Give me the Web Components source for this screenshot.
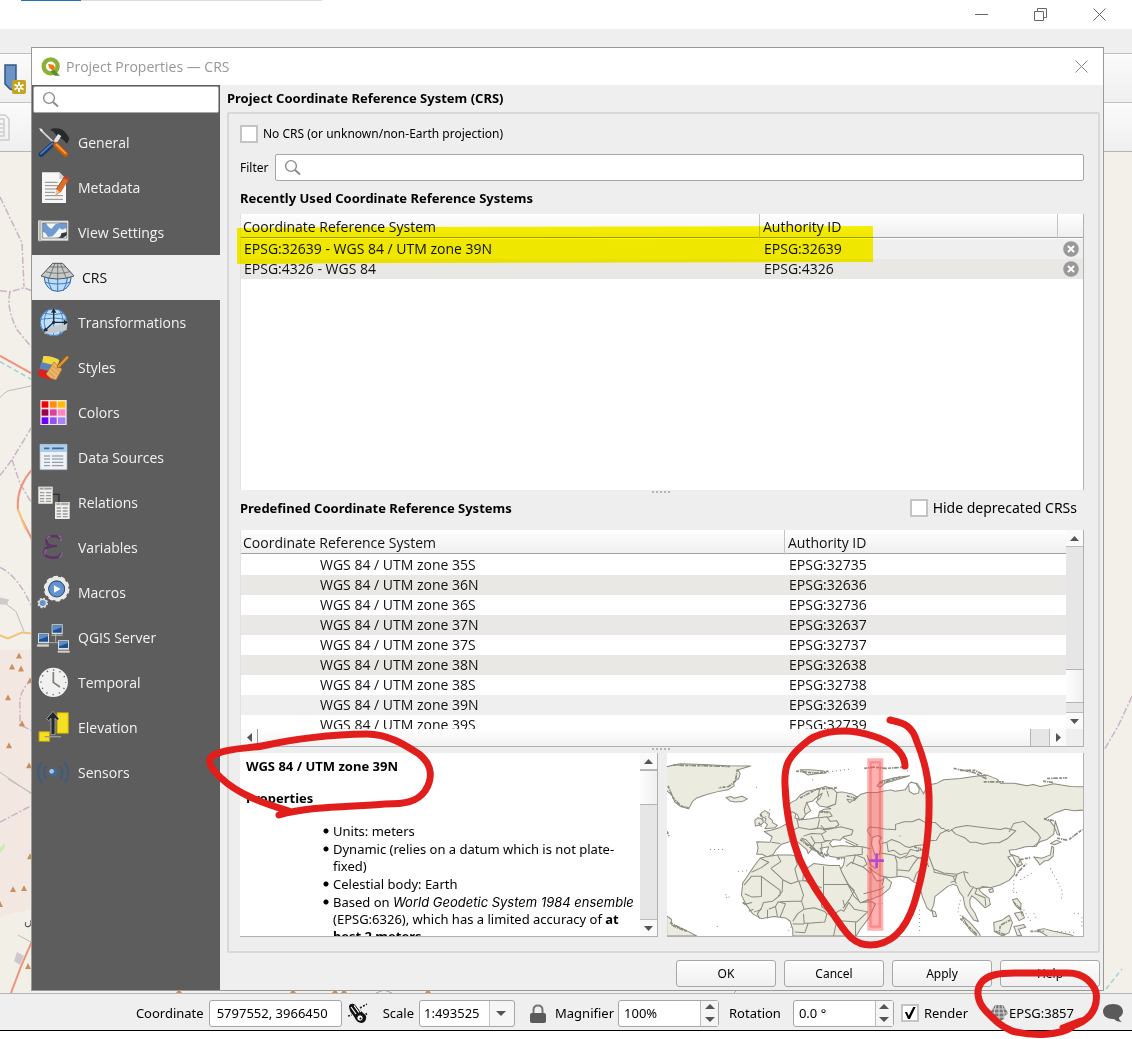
<!DOCTYPE html>
<html lang="en">
<head>
<meta charset="utf-8">
<title>Project Properties — CRS</title>
<style>
body {
  margin: 0;
  background: #fff;
  color: #111;
  font-family: 'Open Sans', 'Noto Sans', sans-serif;
  font-size: 14px;
  --small-font: 'Noto Sans', 'Open Sans', sans-serif;
  --line: #a6a6a6;
  --panel: #efefef;
}
</style>
</head>
<body>
<main-window></main-window>

<script>
// registers an element whose shadow root is cloned from the given markup
function define(name, html, setup) {
  const $template = document.createElement('template');
  $template.innerHTML = html;
  window.customElements.define(name, class extends HTMLElement {
    constructor() {
      super();
      this.attachShadow({mode: 'open'});
      this.shadowRoot.appendChild($template.content.cloneNode(true));
    }
    connectedCallback() {
      if (setup && !this.ready) {
        this.ready = true;
        setup(this, this.shadowRoot);
      }
    }
  });
}

/* ---------- small controls ---------- */

define('search-box', `
<style>
:host { display: block; height: 27px; }
label {
  display: flex;
  align-items: center;
  box-sizing: border-box;
  height: 100%;
  padding-left: 8px;
  gap: 6px;
  background: #fff;
  border: 1px solid var(--line);
  border-radius: 2px;
}
input { flex: 1; min-width: 0; border: 0; outline: 0; background: none; font: inherit; }
</style>
<label>
  <svg width="17" height="17" viewBox="0 0 17 17" fill="none" stroke="#8c8c8c"><circle cx="7" cy="7" r="5.4" stroke-width="1.4"/><path d="M11 11l5 4.5" stroke-width="2"/></svg>
  <input type="text">
</label>
`, (el, root) => {
  root.querySelector('input').setAttribute('aria-label', el.getAttribute('label'));
});

define('check-box', `
<style>
:host { display: block; }
label { display: flex; align-items: center; gap: 5px; height: 18px; white-space: nowrap; }
input {
  appearance: none;
  margin: 0;
  width: 18px;
  height: 18px;
  background: #fff;
  border: 2px solid #c4c4c4;
}
input:checked::before {
  content: '';
  display: block;
  width: 12px;
  height: 12px;
  margin: 1px;
  background: #000;
  clip-path: polygon(8% 42%, 26% 42%, 40% 72%, 78% 0, 98% 0, 50% 100%, 34% 100%);
}
</style>
<label><input type="checkbox"><span><slot></slot></span></label>
`, (el, root) => {
  root.querySelector('input').checked = el.hasAttribute('checked');
});

define('push-button', `
<style>
:host { display: block; width: 100px; }
button {
  width: 100%;
  height: 27px;
  padding: 0;
  border: 1px solid #a8a8a8;
  border-radius: 3px;
  background: linear-gradient(#fdfdfd, #f0f0f0);
  font: 12px/24px var(--small-font);
  color: #000;
}
</style>
<button type="button"><slot></slot></button>
`);

define('spin-field', `
<style>
:host { display: block; }
label { display: flex; align-items: center; gap: var(--label-gap, 4px); }
.field {
  display: flex;
  box-sizing: border-box;
  width: 101px;
  height: 27px;
  background: #fff;
  border: 1px solid var(--line);
  border-radius: 3px;
}
input { flex: 1; min-width: 0; border: 0; padding: 0 5px; background: none; font: inherit; color: #000; }
.arrows { display: flex; flex-direction: column; width: 17px; border-left: 1px solid #bbb; background: #f5f5f5; }
button { flex: 1; border: 0; padding: 0; background: none; }
svg { display: block; margin: 0 auto; fill: #555; }
</style>
<label><slot></slot>
  <span class="field">
    <input type="text">
    <span class="arrows">
      <button type="button" aria-label="Up"><svg width="10" height="5"><path d="M5 0l5 5H0z"/></svg></button>
      <button type="button" aria-label="Down"><svg width="10" height="5"><path d="M0 0h10L5 5z"/></svg></button>
    </span>
  </span>
</label>
`, (el, root) => {
  root.querySelector('input').value = el.getAttribute('value');
});

// scroll bar: before / thumb / after are flex weights of the track
define('scroll-bar', `
<style>
:host { display: flex; flex-direction: column; width: 17px; background: #e6e6e6; }
:host([horizontal]) { flex-direction: row; width: auto; height: 17px; }
button { flex: none; width: 17px; height: 17px; padding: 0; border: 0; background: #fafafa; border-bottom: 1px solid #bbb; }
button:last-child { border-bottom: 0; border-top: 1px solid #bbb; }
:host([horizontal]) button { border: 0; border-right: 1px solid #999; }
:host([horizontal]) button:last-child { border: 0; border-left: 1px solid #bbb; }
svg { display: block; margin: 0 auto; fill: #555; }
:host([horizontal]) svg { transform: rotate(-90deg); }
.thumb { background: linear-gradient(90deg, #fdfdfd, #f0f0f0); border: solid #b4b4b4; border-width: 1px 0; }
:host([horizontal]) .thumb { background: linear-gradient(#fff, #f1f1f1); border-width: 0 1px 0 0; }
</style>
<button type="button" aria-label="Back"><svg width="9" height="5"><path d="M4.500 0L9 5H0z"/></svg></button>
<div class="before"></div><div class="thumb"></div><div class="after"></div>
<button type="button" aria-label="Forward"><svg width="9" height="5"><path d="M0 0h9L4.500 5z"/></svg></button>
`, (el, root) => {
  for (const part of ['before', 'thumb', 'after']) {
    root.querySelector('.' + part).style.flex = (el.getAttribute(part) || 0) + ' 0 0';
  }
});

define('splitter-grip', `
<style>
:host { display: flex; justify-content: center; height: 6px; }
i { width: 20px; height: 2px; margin-top: 1px; background: repeating-linear-gradient(90deg, #b5b5b5 0 2px, transparent 2px 4px); }
</style>
<i></i>
`);

/* ---------- side navigation ---------- */

const ICONS = {
  General: `<path d="M121 389l44 42" stroke="#d5d8d8" stroke-width="5"/><path d="M117 384l9 3 4 8-8-3z" fill="#eee"/>
    <path d="M182 404l-24 30" stroke="#d8dbe0" stroke-width="9"/><path d="M158 432l-35 32" stroke="#1d3c6b" stroke-width="15" stroke-linecap="round"/><path d="M157 430l-34 31" stroke="#4b7fc0" stroke-width="5" stroke-linecap="round"/>
    <path d="M167 434l30 29" stroke="#ce5c00" stroke-width="15" stroke-linecap="round"/><path d="M169 433l28 27" stroke="#fba04a" stroke-width="5" stroke-linecap="round"/>
    <path d="M150 389q14-7 32-2 12 4 24 24l2 6-7 14-14-14-16-5q-4-16-21-23z" fill="#262a2b"/><path d="M174 402l10 6-12 18-9-7z" fill="#e6e6e6"/>`,
  Metadata: `<path d="M126 517h52l20 20v72h-72z" fill="#f7f7f5"/><path d="M178 517v20h20z" fill="#cfcfcc"/><path d="M135 547h38M135 557h40M135 567h36M135 577h30M135 587h54M135 598h54" stroke="#8b8b88" stroke-width="3"/>
    <path d="M194 530l14 6-25 40-16 10 3-21z" fill="#d9702e"/><path d="M194 530l-24 36" stroke="#a84a14" stroke-width="3"/><path d="M193 527l16 7-4 8-15-8z" fill="#c44127"/><path d="M170 568l9 8-13 9z" fill="#e8caa0"/>`,
  'View Settings': `<path d="M114 662h91v60h-91z" fill="#e4e4e2"/><path d="M116 660h8v64h-8z" fill="#b9b9b5"/><path d="M128 669h72v45h-72z" fill="#f4f6fa"/><path d="M128 669h10l6 10 10 8 12-14 14-4h20v14l-12 6-10-4-8 10-12 14-14 2-8-12-8-4z" fill="#6f9bd1"/><path d="M170 714q14-2 14-14l17-4v9l-12 9z" fill="#333a3d"/><path d="M128 669h72v45h-72z" fill="none" stroke="#67696b" stroke-width="2"/>`,
  CRS: `<circle cx="173" cy="84" r="40" fill="#b9dcfa" stroke="#33649c" stroke-width="3"/><path d="M136 97q37 10 74 0M173 44v81M153 46q-20 36 4 77M193 46q20 36-4 77" fill="none" stroke="#4278b8" stroke-width="3"/>
    <path d="M158 40h30l34 38q-49 18-99 0z" fill="#c5c8c8" stroke="#555" stroke-width="3"/><path d="M173 40v48M165 40l-18 45M181 40l18 45M148 51h50M136 65q37 10 74 0" fill="none" stroke="#555" stroke-width="2"/>`,
  Transformations: `<circle cx="161" cy="217" r="41" fill="#bfe0fb"/><circle cx="161" cy="217" r="40" fill="none" stroke="#3f77bb" stroke-width="3"/><path d="M121 208q40-8 80 0M126 238q35 8 70 0M161 177v80M143 180q-22 37 2 75M179 180q22 37-2 75M132 190q29 8 58 0" fill="none" stroke="#4a85c9" stroke-width="3"/>
    <path d="M150 232l52-12-2 20-34 8-34 4z" fill="#c4c9cc"/><path d="M161 217v-34M161 217h34M161 217l-24 22" stroke="#23292c" stroke-width="4"/><path d="M153 188l8-14 8 14zM192 209l12 8-12 8zM131 245l4-13 9 10z" fill="#23292c"/><circle cx="161" cy="217" r="5" fill="#23292c"/>`,
  Styles: `<path d="M130 318q24-2 48 12l-6 20-46-12z" fill="#f2d944"/><path d="M124 336l46 12-8 18-44-8z" fill="#5b84b8"/><path d="M116 356l46 10-4 22q-30 0-44-14z" fill="#d8231f"/><path d="M162 336l24 22-18 32q-18-2-30-18z" fill="#ecb368" stroke="#a86a1c" stroke-width="2"/><path d="M146 366l18 16M152 356l20 18M158 348l20 16" stroke="#c48736" stroke-width="2"/><path d="M176 349l26-27" stroke="#8d5a12" stroke-width="11" stroke-linecap="round"/><path d="M176 349l26-27" stroke="#e09632" stroke-width="7" stroke-linecap="round"/>`,
  Colors: `<path d="M121 450h79v75h-79z" fill="#efe4ee"/><path d="M125 454h20v19h-20z" fill="#f40000"/><path d="M150 454h20v19h-20z" fill="#ff9000"/><path d="M174 454h22v19h-22z" fill="#fcc000"/><path d="M125 478h20v19h-20z" fill="#9c0046"/><path d="M150 478h20v19h-20z" fill="#e0409c"/><path d="M174 478h22v19h-22z" fill="#ff86b8"/><path d="M125 502h20v20h-20z" fill="#6a00f8"/><path d="M150 502h20v20h-20z" fill="#9450f8"/><path d="M174 502h22v20h-22z" fill="#a684f4"/>`,
  'Data Sources': `<path d="M120 583h81v76h-81z" fill="#f0f1f2"/><path d="M121 584h79v22h-79z" fill="#a9cdec"/><path d="M120 583h81v76h-81z" fill="none" stroke="#9db8d2" stroke-width="2"/><path d="M132 595h16M156 595h35" stroke="#456a94" stroke-width="5"/><path d="M132 618h18M132 627h18M132 637h18M132 647h18M156 618h34M156 627h34M156 637h34M156 647h34" stroke="#7b8ca4" stroke-width="3"/>`,
  Relations: `<path d="M158 733h19v24" fill="none" stroke="#2c3135" stroke-width="4"/><path d="M115 710h43v51h-43zM165 756h44v51h-44z" fill="#efefec"/><path d="M115 710h43v10h-43zM165 756h44v10h-44z" fill="#d3d3cf"/><path d="M120 716h10M134 716h20M120 728h13M120 737h13M120 746h13M120 754h13M138 728h15M138 737h15M138 746h15M138 754h15M170 762h10M184 762h20M170 774h13M170 783h13M170 792h13M170 800h13M188 774h15M188 783h15M188 792h15M188 800h15" stroke="#9c9c98" stroke-width="4"/>`,
  Variables: `<path d="M183 58q-6-10-24-10-20 0-20 14 0 15 20 16h12M159 79q-26 0-26 18 0 16 26 16 20 0 27-13" fill="none" stroke="#5c3566" stroke-width="8"/><path d="M176 47q8 4 8 16M141 58q2-8 10-10M136 104q-4-10 4-16M178 112q8-4 9-14" fill="none" stroke="#8d6795" stroke-width="4"/>`,
  Macros: `<circle cx="170" cy="206" r="30" fill="none" stroke="#eceae6" stroke-width="11" /><circle cx="170" cy="206" r="35" fill="none" stroke="#eceae6" stroke-width="7" stroke-dasharray="14 8"/><circle cx="170" cy="207" r="24" fill="#6293cf" stroke="#2d4f7c" stroke-width="3"/><path d="M162 196l20 11-20 11z" fill="#fff"/><circle cx="128" cy="249" r="11" fill="#6293cf" stroke="#e4e4e0" stroke-width="4"/><circle cx="128" cy="249" r="14" fill="none" stroke="#e4e4e0" stroke-width="4" stroke-dasharray="6 5"/>`,
  'QGIS Server': `<path d="M167 342v24M132 368h50" fill="none" stroke="#a8aaa8" stroke-width="3"/><path d="M155 313h33v30h-33zM114 340h33v30h-33zM174 361h33v28h-33z" fill="#dcdcd8"/><path d="M158 316h27v22h-27zM117 343h27v22h-27zM177 364h27v20h-27z" fill="#1f4f91"/><path d="M158 316h27v6l-27 10zM117 343h27v6l-27 10zM177 364h27v5l-27 10z" fill="#5f8cc4"/><path d="M154 346h34M112 374h34v5h-34zM174 393h34v4h-34z" fill="#d5d5d1" stroke="#d5d5d1" stroke-width="2"/>`,
  Temporal: `<circle cx="160" cy="487" r="44" fill="#f1f2f0"/><circle cx="160" cy="487" r="37" fill="none" stroke="#41668f" stroke-width="4" stroke-dasharray="4 15.370" stroke-dashoffset="2"/><path d="M160 456v31l20 14" fill="none" stroke="#7e7e7c" stroke-width="5"/>`,
  Elevation: `<path d="M171 578h34v62h-34z" fill="#f7e020" stroke="#b79c0c" stroke-width="3"/><path d="M117 635h32v29h-32z" fill="#f7e020" stroke="#b79c0c" stroke-width="3"/><path d="M134 650h49" stroke="#9a9a94" stroke-width="4"/><path d="M159 574l18 22-5 6-7-7v49h-12v-49l-7 7-6-6z" fill="#22282a" stroke="#c9cbc9" stroke-width="2"/>`,
  Sensors: `<circle cx="159" cy="757" r="12" fill="#3c699f"/><circle cx="155" cy="754" r="7" fill="#a8c4e4"/><path d="M139 739q-14 18 0 38M125 727q-22 30 0 62M180 739q14 18 0 38M194 727q22 30 0 62" fill="none" stroke="#3c5b80" stroke-width="6"/>`
};
// top of each icon's cell on the icon sheet
const ICON_TOP = {
  General: 378, Metadata: 513, 'View Settings': 648, CRS: 33, Transformations: 168, Styles: 303, Colors: 438,
  'Data Sources': 573, Relations: 708, Variables: 33, Macros: 168, 'QGIS Server': 303, Temporal: 438, Elevation: 573, Sensors: 708
};

define('nav-item', `
<style>
:host { display: block; }
button {
  display: flex;
  align-items: center;
  gap: 9px;
  width: 100%;
  height: 45px;
  padding: 0 5px;
  border: 0;
  background: none;
  color: #f2f2f2;
  font: inherit;
  text-align: left;
}
:host([selected]) button { background: var(--panel); color: #111; }
svg { flex: none; overflow: visible; }
</style>
<button type="button"><svg width="32" height="33" fill="none"></svg><slot></slot></button>
`, (el, root) => {
  const name = el.textContent;
  const svg = root.querySelector('svg');
  // the selected entry has a larger icon
  const width = el.hasAttribute('selected') ? 36 : 32;
  svg.setAttribute('width', width);
  svg.setAttribute('viewBox', `111 ${ICON_TOP[name]} ${width * 3} 99`);
  svg.innerHTML = ICONS[name];
});

define('side-nav', `
<style>
:host { display: flex; flex-direction: column; width: 188px; background: #5d5d5d; }
search-box { margin: 1px 1px 7px; }
nav { display: flex; flex-direction: column; }
</style>
<search-box label="Search options"></search-box>
<nav></nav>
`, (el, root) => {
  const nav = root.querySelector('nav');
  Object.keys(ICONS).forEach(name => {
    const item = document.createElement('nav-item');
    item.textContent = name;
    if (name === el.getAttribute('current')) item.setAttribute('selected', '');
    nav.appendChild(item);
  });
});

/* ---------- CRS tables ---------- */

const tableStyle = `
:host { display: flex; min-height: 0; box-sizing: border-box; background: #fff; border-right: 1px solid #b0b0b0; border-left: 1px solid #e2e2e2; overflow: hidden; }
table { width: 100%; table-layout: fixed; border-collapse: separate; border-spacing: 0; }
th {
  box-sizing: border-box;
  height: 25px;
  padding: 2px 2px 0;
  text-align: left;
  font-weight: normal;
  line-height: 22px;
  background: linear-gradient(#fff, #eee);
  border-bottom: 1px solid #fff;
  border-right: 1px solid #c4c4c4;
  box-shadow: inset 0 -1px #a0a0a0;
}
th + th { padding-left: 3px; }
th:last-child { border-right: 0; }
td { height: 20px; padding: 0 3px; line-height: 20px; white-space: nowrap; }
td + td { padding: 0 4px; }
tr.alt td { background: #e9e8e4; }
tr.current td { background: #efefef; }
`;

define('recent-crs-table', `
<style>${tableStyle}
div { width: 100%; }
button { display: block; margin: 0 auto; padding: 0; border: 0; background: none; }
svg { display: block; }
</style>
<div>
<table>
  <colgroup><col><col style="width:298px"><col style="width:25px"></colgroup>
  <thead><tr><th>Coordinate Reference System</th><th>Authority ID</th><th></th></tr></thead>
  <tbody></tbody>
</table>
</div>
`, (el, root) => {
  const rows = [['EPSG:32639 - WGS 84 / UTM zone 39N', 'EPSG:32639', 'current'], ['EPSG:4326 - WGS 84', 'EPSG:4326', 'alt']];
  root.querySelector('tbody').innerHTML = rows.map(([name, id, cls]) => `
    <tr class="${cls}"><td>${name}</td><td>${id}</td><td><button type="button" aria-label="Remove"><svg width="16" height="16"><circle cx="8" cy="8" r="7.800" fill="#999"/><path d="M5 5l6 6M11 5l-6 6" stroke="#fff" stroke-width="2"/></svg></button></td></tr>`).join('');
});

define('predefined-crs-table', `
<style>${tableStyle}
:host { flex-direction: column; border-bottom: 1px solid #b0b0b0; }
.top { display: flex; height: 199px; }
.rows { flex: 1; overflow: hidden; }
td:first-child { padding-left: 79px; }
.bottom { display: flex; background: var(--panel); }
.bottom scroll-bar { flex: 1; }
.bottom span { width: 17px; }
</style>
<div class="top">
  <div class="rows">
    <table>
      <colgroup><col><col style="width:281px"></colgroup>
      <thead><tr><th>Coordinate Reference System</th><th>Authority ID</th></tr></thead>
      <tbody></tbody>
    </table>
  </div>
  <scroll-bar before="124" thumb="33" after="9"></scroll-bar>
</div>
<div class="bottom"><scroll-bar horizontal thumb="773" after="18"></scroll-bar><span></span></div>
`, (el, root) => {
  const zones = ['35S', '36N', '36S', '37N', '37S', '38N', '38S', '39N', '39S'];
  root.querySelector('tbody').innerHTML = zones.map((zone, i) => {
    const code = (zone.endsWith('N') ? 'EPSG:326' : 'EPSG:327') + zone.slice(0, 2);
    const cls = zone === '39N' ? 'current' : i % 2 ? 'alt' : '';
    return `<tr class="${cls}"><td>WGS 84 / UTM zone ${zone}</td><td>${code}</td></tr>`;
  }).join('');
});

/* ---------- details and extent ---------- */

define('crs-details', `
<style>
:host { display: flex; box-sizing: border-box; background: #fff; border: 1px solid #b0b0b0; border-width: 0 1px 1px 0; overflow: hidden; font: 13px/17px var(--small-font); color: #000; }
.text { flex: 1; padding: 5px 5px 0 6px; overflow: hidden; }
h3 { margin: 0 0 15px; font-size: 13px; line-height: 17px; }
h3:nth-of-type(2) { margin-bottom: 16px; }
ul { margin: 0; padding: 0 0 0 77px; list-style: none; }
li { margin-bottom: 1px; padding-left: 10px; background: radial-gradient(circle at 3px 8px, #000 2px, transparent 3px); }
i { font-family: 'Inter', sans-serif; }
</style>
<div class="text">
  <h3>WGS 84 / UTM zone 39N</h3>
  <h3>Properties</h3>
  <ul>
    <li>Units: meters</li>
    <li>Dynamic (relies on a datum which is not plate-fixed)</li>
    <li>Celestial body: Earth</li>
    <li>Based on <i>World Geodetic System 1984 ensemble</i> (EPSG:6326), which has a limited accuracy of <b>at best 2 meters</b>.</li>
  </ul>
</div>
<scroll-bar thumb="33" after="116"></scroll-bar>
`);

define('extent-map', `
<style>
:host { display: block; box-sizing: border-box; background: #fff; border: 1px solid #b0b0b0; border-width: 0 1px 1px 0; overflow: hidden; }
svg { display: block; width: 100%; height: 100%; }
.land { fill: #ecebe0; stroke: #8b8a7e; stroke-width: 3; stroke-linejoin: round; }
.border { fill: none; stroke: #8b8a7e; stroke-width: 3; stroke-linejoin: round; }
.sea { fill: #fff; stroke: #8b8a7e; stroke-width: 3; }
.coast { fill: none; stroke: #8b8a7e; stroke-width: 5; stroke-dasharray: 9 3 4 2 14 4; }
.dots { fill: none; stroke: #8b8a7e; stroke-width: 3; stroke-dasharray: 3 9; }
</style>
<svg viewBox="21 42 1248 546" preserveAspectRatio="none" role="img" aria-label="Extent of the selected CRS">
  <g class="land">
    <path d="M15 84L60 74 130 76 200 80 272 81 234 92 240 104 236 118 220 128 222 140 204 152 170 158 140 166 110 176 98 186 86 208 62 202 44 188 36 168 15 150z"/>
    <path d="M198 175l16-3 8 5 24-6 16 8-16 8-22 1-14-3z"/>
    <path d="M302 222l12-8 14 8-2 12 10 8 2 8 14 8-8 7-30 3 8-12-8-8 4-10-12-6zM284 243l10-8 12 4 4 10-8 8-16 3z"/>
    <path d="M290 307L330 308 336 292 318 280 312 276 335 272 360 264 385 250 392 236 390 222 400 214 408 222 404 236 425 241 452 238 474 234 478 218 490 210 512 208 500 204 526 194 528 160 545 158 575 164 592 174 582 184 560 180 568 190 584 180 600 166 620 160 650 160 690 152 705 156 735 152 745 136 770 132 782 150 790 164 796 150 800 138 830 132 850 122 900 118 940 112 980 108 1010 120 1020 132 1060 132 1100 140 1118 136 1140 142 1180 134 1230 142 1275 143 1275 212 1240 214 1215 210 1185 220 1152 240 1170 246 1182 262 1180 284 1160 300 1140 306 1120 320 1095 322 1066 330 1046 332 1050 344 1062 348 1074 352 1086 374 1072 382 1064 366 1056 348 1042 352 1052 366 1066 384 1062 404 1046 422 1018 436 990 444 966 440 956 450 968 462 986 476 990 494 974 504 962 492 948 478 934 468 928 482 930 500 944 520 954 545 940 540 922 514 914 500 908 470 898 458 890 438 878 434 862 440 840 458 824 470 820 496 812 514 800 504 786 470 776 434 762 428 744 414 720 410 690 414 660 408 640 396 628 384 640 410 650 424 668 420 672 410 694 428 688 446 664 466 630 480 600 490 584 460 562 430 540 390 550 376 554 352 530 354 508 350 500 338 506 322 480 326 486 340 492 354 478 346 466 330 450 314 436 300 424 296 440 312 462 326 454 330 444 342 440 330 416 310 400 300 384 308 364 314 348 330 340 344 322 352 306 344 290 344 294 326z"/>
    <path d="M386 217L384 202 392 190 408 182 420 168 440 156 470 150 496 142 520 150 530 160 526 194 500 204 478 200 468 188 480 176 486 162 470 174 456 186 440 190 446 204 452 214 436 226 428 240 418 242 412 226 398 218z"/>
    <path d="M300 356l14-4 38-6 38 0 14 2 6 20 24 10 10 6 16-12 48 6 30 0 6 18 20 40 18 34 18 18 36-2 10 6-20 42-26 34-12 20h-190l0-20-8-24-14-10-34-4-38 6-26-14-20-28-14-28 4-36 20-30 18-26z"/>
    <path d="M20 528l14 10 2 18 20 6 24 10 30 16H20zM815 512l10 4 4 14-10 0z"/>
    <path d="M905 528l24 20 26 30 6 12h-10l-24-22zM1000 548l26-8 20-14 10 22-10 30-20 10-24-14zM1060 560l30-6 6 8-22 6 10 20-14-2-6-18zM1130 570l20-4 30 8 50 10 20 10h-80z"/>
    <path d="M1056 480l14-4 12 16-2 18-14-12zM1062 520l24-4 6 18-16 8zM1120 352l24 4 26-10 4-26 6 4-2 26-14 12-12 2-14 12-6-10zM1170 312l18-10 14 6-20 8zM1184 244l8 24 6 20-8-4-8-20zM985 450l12-4 2 10-10 2z"/>
    <path d="M650 140l12-14 40-10 46-6-34 10-40 12-14 12zM420 92l30 0 40 4 8 6-30 2-24 4z"/>
  </g>
  <g class="sea">
    <path d="M508 312l10-12 22 2 8-8 14 8 30 14-10 6-40-4-26 4z"/>
    <path d="M636 294l18-6 10 6-8 12 6 16-4 22-14 2-6-18-4-14z"/>
    <path d="M745 135l8-6 14 4 10 16-2 12-14 4-14-8z"/>
  </g>
  <path class="border" d="M334 308l26 4M388 250l4 16-4 14 6 16M410 240l6 24 34 6 22-4 6-26M416 264l-22 10M430 290l24-8 30 2 14-8-16-10-30 4M484 284l8 18 20 2M440 188l-8 24 4 14M478 152l-6 30M500 154l6 18M474 236l26-4 10 14 20-2 6 12-12 8-32 4-10-10M478 216l30 2 8 12-14 4M482 268l20 2 40-8 36 10-4 14-26 6M452 290l12 20 20 0 18-6M464 310l-8 14M484 312l2 20M556 306l30 14 20 2 24 6M606 322l0 22-50 6M620 275l8-12 26 2 20 4 32 2 0-16 26-8 24 0 20-8 18 10 30 0 20 18 8 0M622 275l10 16M664 312l16-4 14-8 22 8 18 12 14 4 20-6 22-2 16-12 22-2 12-20 26-12M680 310l4 26 16-4 20 14 20-6M740 346l10-16 20 4 22-6 10 22-28 6-16-8-16 4-8 4M660 340l24 4 20 4 6 20 0 44M706 350l14 6 20-8M710 390l36 4 14-22 14-18 20 6 12 22M760 424l8-22 18-20 18-10M806 350l14 38 30 12 40 4 20-8 14 4M820 388l2 10 56 12 10-2M890 404l-6 20-14 4M878 410l10 22M910 398l6 22 14 20 18 6 34-4M940 440l-10 16-8 14M950 446l-6 16 30 12 2 24M852 270l14 6 20-12 34-6 46 6 54 6 16-4 30 8-26 24-24 12-24 0-24 4-22-6-18 0-16-14-26-10-14-14M1046 278l14-26 30-6 26 22 16 14 8 12-12 26-14 2M556 350l30-4 26 10 8 18-12 8-36-14-14 12M586 346l-10 28M608 382l22 18M620 346l10 28 16 14M610 462l32-8 20-6 10-8M600 490l26-12M672 414l-6 22"/>
  <path class="border" d="M300 356l26 12-22 16-30 14M352 346l10 20-30 20M332 386l36 34 24 12 24-8M404 348l8 26-8 14 10 36 40-2M490 380v54h72M490 434v30l-6 8v28l18 14M432 378l-4 44 56 22M304 410l0 60-28 2-22-10M304 410l56 42 0 14-22 18-28 4-8 22-20 6M304 410l-30 0-22 26M368 420l-2 36-12 14M360 486l40-2 24 0 6-18-14-42M424 484l8 24-20 14-14 22M322 510v26M326 508l20-8 6 30M346 500l8-14 22 6-16 40M302 506l-10 16 6 14M276 488l-24 6M280 508l-14 6M432 508l30-4 30 10 8 8 24-2 18-10 10 4M500 522l-6 24-50 4-12 0-2-28M444 550l-10 28-30-2M530 542l-10 46M524 520l6 22 30 2 30 2 32-30-40-8-16-20-16 28M586 546v42M400 552h32M548 480l6 22M562 434l20 18-14 26-20 28"/>
  <path class="coast" d="M40 78l170 4M232 90l-6 36-20 16-30 4M24 140l14 34 24 26 24 6M420 176l50-26 60-4M408 96l60 6 36-6M612 88l30-4 34 4 58-4M660 132l60-18M880 88l60 12 40 20M900 94l44 0 36 18M970 128l60 0M1160 118l60-2M1148 126l30 4M300 224l8 18M296 250l8 12M420 300l38 30 26 10 20 8M456 326l30 22M530 358l20-2M1150 238l30 6M1066 410l10-16 22-22M1070 380l10-20 30-6M1060 488l20 18 6 22M1050 540l-30 16-4 24M1190 296l30 6M1226 300l40-30M1110 574l40 0M900 536l50 48M1004 574l30 10M30 548l50 26M248 488l14 10M40 558l40 16M21 276l6 14M494 346l10 4M762 322l20 6M768 334l24-4M480 218l24 2M430 238l-20 4M560 170l28 8"/>
  <path class="dots" d="M150 330h40M234 396l36-4M196 464l14 10M198 474l10-6M480 102l90-12M288 144h8M330 210l-20 34M778 510v70M900 480l-8 34 16 26M1170 386l16 30 20 40-4 28M1060 420v40M1056 452l20 10M1090 510l20 34M1080 420l36-20M1240 520l20 2M1120 520l10 20M400 550l-20 30M640 492h30M1190 574l60 4M170 560h4M1264 532v30M456 122h4M718 290h4M740 96l10 0"/>
  <path d="M645 82v466" stroke="#ff5050" stroke-opacity="0.450" stroke-width="48" stroke-linecap="square"/>
  <path d="M631 70h28v490h-28z" fill="none" stroke="#ee4444" stroke-opacity="0.350" stroke-width="7"/>
  <path d="M649 341v44M627 363h44" stroke="#b44ad2" stroke-width="8"/>
</svg>
`);

/* ---------- dialog ---------- */

define('properties-dialog', `
<style>
:host { display: flex; flex-direction: column; box-sizing: border-box; background: var(--panel); border: 1px solid #999; }
header { display: flex; align-items: center; gap: 5px; height: 37px; padding: 0 15px 0 9px; background: #fff; color: #979797; font-size: 14px; }
header h1 { flex: 1; margin: 0; font-size: 14px; font-weight: normal; }
header button { padding: 0; border: 0; background: none; }
header svg { display: block; }
.body { display: flex; flex: 1; min-height: 0; }
.page { display: flex; flex: 1; flex-direction: column; min-width: 0; padding: 0 3px 3px 7px; }
h2 { margin: 0; font: bold 13px/28px var(--small-font); color: #000; }
.page > h2 { line-height: 27px; }
.group {
  display: flex;
  flex: 1;
  flex-direction: column;
  min-height: 0;
  padding: 11px 14px 14px 11px;
  border: 2px solid #d8d8d8;
  border-radius: 2px;
  background: #eee;
}
.small { font: 12px/18px var(--small-font); color: #000; }
.filter { display: flex; align-items: center; gap: 7px; margin: 11px 0 3px; }
.filter search-box { flex: 1; }
recent-crs-table { flex: 1; margin-top: 2px; }
.predefined { display: flex; justify-content: space-between; align-items: center; height: 24px; padding: 0 7px 10px 0; }
.predefined check-box { font: 14px/18px var(--small-font); color: #000; }
predefined-crs-table { height: 217px; }
.bottom { display: flex; gap: 9px; height: 184px; }
.bottom > * { flex: 1; }
footer { display: flex; justify-content: flex-end; gap: 8px; padding-top: 7px; }
</style>
<header>
  <svg width="20" height="19" viewBox="123 169 60 57" fill="none"><circle cx="152" cy="197" r="21" stroke="#8cb135" stroke-width="13"/><path d="M160 205l20 20h-16l-12-12z" fill="#58902c"/><path d="M144 190l16 2 6 10-8 8-10-8z" fill="#ee7913"/></svg>
  <h1>Project Properties — CRS</h1>
  <button type="button" aria-label="Close"><svg width="13" height="13" stroke="#888"><path d="M0.500 0.500l12 12M12.500 0.500l-12 12"/></svg></button>
</header>
<div class="body">
  <side-nav current="CRS"></side-nav>
  <div class="page">
    <h2>Project Coordinate Reference System (CRS)</h2>
    <div class="group">
      <check-box class="small">No CRS (or unknown/non-Earth projection)</check-box>
      <div class="filter small"><span>Filter</span><search-box label="Filter"></search-box></div>
      <h2>Recently Used Coordinate Reference Systems</h2>
      <recent-crs-table></recent-crs-table>
      <splitter-grip></splitter-grip>
      <div class="predefined"><h2>Predefined Coordinate Reference Systems</h2><check-box>Hide deprecated CRSs</check-box></div>
      <predefined-crs-table></predefined-crs-table>
      <splitter-grip></splitter-grip>
      <div class="bottom"><crs-details></crs-details><extent-map></extent-map></div>
    </div>
    <footer>
      <push-button>OK</push-button>
      <push-button>Cancel</push-button>
      <push-button>Apply</push-button>
      <push-button>Help</push-button>
    </footer>
  </div>
</div>
`);

/* ---------- main window ---------- */

define('map-canvas', `
<style>
:host { display: block; background: #f3efe9; overflow: hidden; }
svg { display: block; width: 100%; height: 100%; }
text { font: 12px 'DejaVu Sans', sans-serif; }
</style>
<svg viewBox="0 152 1132 842" preserveAspectRatio="none" fill="none" aria-hidden="true">
  <path d="M0 650h32v260l-32 10z" fill="#f3e8e1"/>
  <path d="M0 920q20-14 31 0v73H0z" fill="#f2f0e6"/>
  <g stroke="#c9b4c9" stroke-width="1.500" stroke-dasharray="7 2 2 2">
    <path d="M0 197l22 46 2 44M0 291l10 1 14-4 8 3M10 292q-4 16 7 38l15 18M32 427l-20 33-12 16M12 460l8 24 12 20M0 568q18 8 32 40M32 680q-14 12-12 28l0 18 12 5M0 823l32-17M1132 697l-14 30-14 24"/>
  </g>
  <path d="M0 398q6-8 14-8l18-4M0 600l16 12 8 20M0 773l32 22M8 780l24 14M18 936l13 7" stroke="#bbb"/>
  <path d="M0 356l32 18M32 470q-16 18-14 40M32 942q-12 26-21 52M22 520l10 20" stroke="#f0937c" stroke-width="2"/>
  <path d="M18 510l8 20M0 636l8 3 14-6 10 1" stroke="#f5c07a" stroke-width="2"/>
  <path d="M0 362l32 18M1106 990l16-20" stroke="#9fd0d8" stroke-width="1.500" stroke-dasharray="5 3"/>
  <path d="M0 598l9 2-2 5H0z" fill="#ccc"/><path d="M0 848l5-4v4l-5 6z" fill="#cdebb0"/><path d="M17 953l7 4-4 9-6-4z" fill="#ccc8cc"/>
  <path d="M16 659l3-6 3 6zM9 670l3-6 3 6zM18 672l3-6 3 6zM27 684l3-6 3 6zM5 701l3-6 3 6zM19 727l3-6 3 6zM6 749l3-6 3 6zM26 769l3-6 3 6zM27 860l3-6 3 6zM10 893l3-6 3 6zM21 892l3-6 3 6zM-3 908l3-6 3 6zM25 970l3-6 3 6zM176 994l3-4 3 4zM290 994l3-4 3 4zM332 994l3-4 3 4zM341 994l3-4 3 4zM425 994l3-4 3 4z" fill="#c9905a"/>
  <path d="M376 994l8-3 8 3M734 994l3-3" stroke="#b9a0b0"/>
  <text x="24" y="925" fill="#555">س</text>
</svg>
`);

define('status-bar', `
<style>
:host {
  display: flex;
  align-items: center;
  justify-content: flex-end;
  box-sizing: border-box;
  height: 37px;
  padding: 2px 8px 0 0;
  border-top: 1px solid #b5b5b5;
  background: var(--panel);
  font: 13px/20px var(--small-font);
  color: #000;
}
.coordinate, .scale { display: flex; align-items: center; gap: 5px; }
input { box-sizing: border-box; width: 133px; height: 27px; padding: 0 7px; border: 1px solid var(--line); border-radius: 3px; background: #fff; font: inherit; color: #000; }
.combo { display: flex; position: relative; }
select { appearance: none; box-sizing: border-box; width: 96px; height: 27px; padding: 0 4px; border: 1px solid var(--line); border-radius: 3px; background: linear-gradient(#c4c4c4, #c4c4c4) 69px 0 / 1px 27px no-repeat, linear-gradient(90deg, #fff 70px, #f6f6f6 70px); font: inherit; color: #000; }
.combo svg { position: absolute; right: 9px; top: 11px; pointer-events: none; }
.extents { margin: 0 15px 0 6px; }
.lock { margin: 0 9px 0 15px; }
.magnifier { margin-right: 10px; }
.rotation { margin-right: 7px; --label-gap: 12px; }
.render { margin-right: 22px; }
button { display: flex; align-items: center; gap: 1px; padding: 0; border: 0; background: none; font: inherit; color: inherit; }
.messages { margin-left: 29px; }
svg { display: block; }
</style>
<label class="coordinate">Coordinate <input type="text" value="5797552, 3966450"></label>
<button type="button" class="extents" aria-label="Toggle extents"><svg width="20" height="21" viewBox="0 0 20 21"><path d="M1 3q1-3 5-2l4 4q3 2 5 5 4 2 3 6-1 4-5 4-3 0-5-3l-3-5q-4-4-4-9z" fill="#111"/><path d="M3 4l5 7M6 2.500l5 7M9 3l4 6" stroke="#fff" stroke-width="1.200"/><circle cx="12" cy="15" r="3.200" fill="#fff" stroke="#000"/><circle cx="12.500" cy="15.500" r="1" fill="#000"/><path d="M12 5l7-4M0 13l4-1M18 10l1 3" stroke="#222" stroke-width="1.500" stroke-dasharray="2 1.500"/></svg></button>
<label class="scale">Scale <span class="combo"><select><option>1:493525</option></select><svg width="10" height="5"><path d="M0 0h10L5 5z" fill="#555"/></svg></span></label>
<button type="button" class="lock" aria-label="Lock scale"><svg width="16" height="19" viewBox="0 0 16 19"><path d="M3.500 10V6q0-4.500 4.500-4.500T12.500 6v4" fill="none" stroke="#777" stroke-width="2"/><rect y="9" width="16" height="10" rx="2" fill="#5a5a5a"/></svg></button>
<spin-field class="magnifier" value="100%">Magnifier</spin-field>
<spin-field class="rotation" value="0.0 °">Rotation</spin-field>
<check-box class="render" checked>Render</check-box>
<button type="button"><svg width="18" height="18" viewBox="0 0 18 18"><path d="M5 1h8l5 8q-2 3-4 3v3l-5 3-5-3v-3q-3 0-4-3z" fill="#777"/><path d="M9 1v17M6 1L4 10v6M12 1l2 9v6M2 5h14M0 9h18M3 13h12" fill="none" stroke="#d6d6d6"/></svg>EPSG:3857</button>
<button type="button" class="messages" aria-label="Messages"><svg width="21" height="20" viewBox="0 0 21 20"><path d="M10 1c6 0 10 3 10 7.500 0 3-2 5-4 6q0 3 3 4-5 1-8-2.500C5 16.500 0 13.500 0 8.500 0 4 4 1 10 1z" fill="#5a5a5a"/></svg></button>
`);

// freehand pen strokes laid over the windows
define('pen-markup', `
<style>
:host { display: block; position: absolute; inset: 0; pointer-events: none; }
:host([highlighter]) { mix-blend-mode: multiply; }
svg { display: block; width: 100%; height: 100%; }
</style>
<svg viewBox="0 0 1132 1039" preserveAspectRatio="none" fill="none" aria-hidden="true"></svg>
`, (el, root) => {
  root.querySelector('svg').innerHTML = el.hasAttribute('highlighter')
    ? '<path d="M237 228l123-1 513-1v36l-500 1-136 1z" fill="#fff700"/>'
    : `<g stroke="#e21e1c" stroke-width="7" stroke-linecap="round" stroke-linejoin="round">
      <path d="M289 811C262 803 238 794 221 778C208 766 206 758 216 754C232 747 250 749 267 745C290 740 330 734 367 734C388 734 405 745 419 754C434 766 432 780 425 791C417 802 405 804 385 804C350 807 310 806 279 815"/>
      <path d="M905 766C905 752 890 741 873 736C847 727 822 731 809 740C788 756 784 765 785 785C786 813 790 835 800 860C810 883 822 899 835 917C845 931 852 945 870 945C893 945 906 928 914 904C923 875 930 835 929 795C928 770 922 754 917 742C912 724 902 723 890 720"/>
      <path d="M1063 1028L1081 1021M1072 1027C1060 1035 1035 1037 1012 1031C998 1025 992 1017 985 1010C977 1001 976 990 981 983C987 975 998 973 1015 973L1068 973C1085 973 1093 984 1096 992C1098 1004 1093 1014 1086 1019C1080 1024 1074 1026 1063 1028"/>
    </g>`;
});

define('main-window', `
<style>
:host { display: flex; flex-direction: column; position: relative; min-width: 900px; height: 100vh; overflow: hidden; }
.tab { display: flex; height: 1px; padding-left: 21px; }
.tab i { width: 60px; background: #1b75bb; }
.tab b { width: 241px; background: #ddd; }
.title { display: flex; justify-content: flex-end; align-items: center; gap: 46px; box-sizing: border-box; height: 28px; padding: 0 26px 2px 0; }
.title button { padding: 0; border: 0; background: none; }
svg { display: block; }
.menu { height: 24px; background: var(--panel); }
.bar { height: 49px; box-sizing: border-box; border-top: 1px solid #c2c2c2; background: linear-gradient(#fbfbfb, #efefef); }
.bar svg { margin: 10px 0 0 4px; }
.bar + .bar svg { margin: 11px 0 0; }
map-canvas { flex: 1; min-height: 0; border-top: 1px solid #b5b5b5; }
.below { height: 8px; border-top: 1px solid #000; background: #fff; }
properties-dialog { position: absolute; top: 47px; right: 28px; bottom: 48px; left: 31px; }
</style>
<div class="tab"><i></i><b></b></div>
<div class="title">
  <button type="button" aria-label="Minimize"><svg width="13" height="13" stroke="#666"><path d="M0 6.500h13"/></svg></button>
  <button type="button" aria-label="Restore"><svg width="13" height="13" fill="none" stroke="#666"><path d="M0.500 3.500h9v9h-9zM3.500 3.500v-3h9v9h-3"/></svg></button>
  <button type="button" aria-label="Close"><svg width="13" height="13" stroke="#666"><path d="M0.500 0.500l12 12M12.500 0.500l-12 12"/></svg></button>
</div>
<div class="menu"></div>
<div class="bar"><svg width="24" height="32" viewBox="0 0 24 32"><path d="M1 1h11v26l-6-2-5-5z" fill="#6a94c8" stroke="#35587f" stroke-width="1.500"/><rect x="8" y="16" width="14" height="14" rx="2" fill="#c4a420"/><path d="M15 18v10M10.500 20.500l9 5M10.500 25.500l9-5" stroke="#fff" stroke-width="2"/><circle cx="15" cy="23" r="1.200" fill="#c4a420"/></svg></div>
<div class="bar"><svg width="11" height="28" viewBox="0 0 11 28" fill="none" stroke="#ccc" stroke-width="1.500"><path d="M-2 1h7l4 4v21H-2M-2 5h6v17H-2M0 10h3M0 14h3M0 18h3"/></svg></div>
<map-canvas></map-canvas>
<status-bar></status-bar>
<div class="below"></div>
<properties-dialog></properties-dialog>
<pen-markup highlighter></pen-markup>
<pen-markup></pen-markup>
`);
</script>
</body>
</html>
